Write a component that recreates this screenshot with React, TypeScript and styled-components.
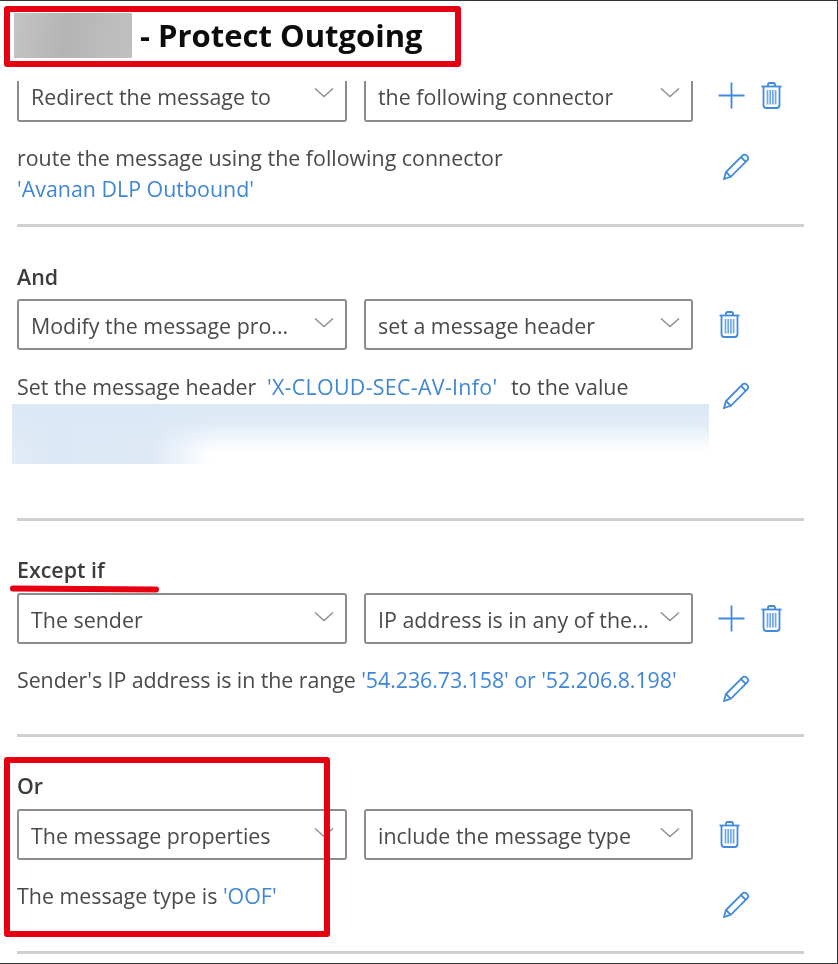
import React from "react";
import styled, { createGlobalStyle } from "styled-components";

const Global = createGlobalStyle`
  html, body { margin: 0; padding: 0; background: #fff; }
`;

const Page = styled.div`
  position: relative;
  width: 838px;
  height: 964px;
  box-sizing: border-box;
  overflow: hidden;
  background: #fff;
  border-top: 1px solid #333;
  border-right: 1px solid #333;
  border-bottom: 1px solid #333;
  font-family: "Open Sans", "Noto Sans", sans-serif;
  font-size: 21.4px;
  color: #444;
`;

const Blurred = styled.div`
  display: flow-root;
  position: relative;
  filter: blur(0.45px);
`;

const TitleBox = styled.header`
  display: flex;
  align-items: center;
  box-sizing: border-box;
  width: 457px;
  height: 61px;
  margin: 5px 0 14px 4px;
  padding-left: 4px;
  border: 6px solid #e60012;
  border-radius: 3px;
`;

const Redacted = styled.div`
  width: 118px;
  height: 45px;
  flex: none;
  margin-bottom: 2px;
  background: linear-gradient(100deg, #c4c4c4 0%, #b4b4b4 45%, #bcbcbc 75%, #c0c0c0 100%);
`;

const Title = styled.h1`
  margin: 0 0 3px 8px;
  font-size: 31px;
  line-height: 40px;
  font-weight: 700;
  white-space: nowrap;
  color: #0c0c0c;
`;

const Section = styled.section<{ $first?: boolean; $top?: number }>`
  padding: ${(p) => (p.$first ? 0 : p.$top ?? 34)}px 0 0 17px;
`;

const Label = styled.div<{ $gap?: number }>`
  height: 30px;
  line-height: 30px;
  margin-bottom: ${(p) => p.$gap ?? 8}px;
  font-weight: 600;
  color: #3c3c3c;
`;

const Controls = styled.div`
  display: flex;
  align-items: flex-start;
`;

const Select = styled.div<{ $clipped?: boolean; $wide?: boolean }>`
  display: flex;
  align-items: center;
  justify-content: space-between;
  box-sizing: border-box;
  width: ${(p) => (p.$wide ? 330 : 329)}px;
  height: ${(p) => (p.$clipped ? 41 : 51)}px;
  padding: ${(p) => (p.$clipped ? "0 11px 9px 12px" : "2px 11px 0 12px")};
  border: 2px solid #8c8c8c;
  border-top: ${(p) => (p.$clipped ? "none" : "2px solid #8c8c8c")};
  border-radius: ${(p) => (p.$clipped ? "0 0 3px 3px" : "3px")};
  margin-right: 17px;
  white-space: nowrap;
  color: #4a4a4a;
  &:nth-child(2) {
    margin-right: 0;
  }
`;

const Chevron = styled.svg`
  width: 20px;
  height: 11px;
  flex: none;
  margin-bottom: 7px;
  fill: none;
  stroke: #8f8f8f;
  stroke-width: 1.5;
`;

const Actions = styled.div<{ $clipped?: boolean; $solo?: boolean }>`
  display: flex;
  align-items: center;
  gap: 16px;
  height: ${(p) => (p.$clipped ? 29 : 51)}px;
  margin-left: ${(p) => (p.$solo ? 26 : 25)}px;
`;

const Icon = styled.svg<{ $w: number; $h: number }>`
  display: block;
  width: ${(p) => p.$w}px;
  height: ${(p) => p.$h}px;
  flex: none;
  fill: none;
  stroke: #3f8ae0;
  stroke-width: 1.8;
`;

const Description = styled.div<{ $gap?: number }>`
  display: grid;
  grid-template-columns: 706px auto;
  margin-top: ${(p) => p.$gap ?? 20}px;
  line-height: 31px;
  white-space: nowrap;
  color: #4a4a4a;
`;

const TightLine = styled.div`
  letter-spacing: -0.07px;
`;

const Link = styled.span<{ $spread?: boolean }>`
  color: #3f87d6;
  letter-spacing: ${(p) => (p.$spread ? "0.3px" : "inherit")};
`;

const Spaced = styled.span`
  margin: 0 8px 0 5px;
`;

const PencilSlot = styled.div`
  height: 0;
  padding-top: 11px;
`;

const BlurBlock = styled.div`
  width: 697px;
  height: 60px;
  margin: 2px 0 0 -5px;
  background:
    linear-gradient(180deg, #dce8f5 0%, rgba(220, 232, 245, 0.9) 30%, rgba(220, 232, 245, 0.35) 58%, rgba(220, 232, 245, 0) 80%),
    linear-gradient(90deg, #e3ecf7 0, #dce8f5 40px, #dfe9f6 140px, rgba(223, 233, 246, 0) 200px);
`;

const Divider = styled.hr<{ $top: number }>`
  width: 787px;
  height: 3px;
  margin: ${(p) => p.$top}px 0 0;
  border: none;
  background: #d0d0d0;
`;

const UnderlineMark = styled.div`
  position: absolute;
  left: 10px;
  top: 585px;
  width: 149px;
  height: 6px;
  border-radius: 3px;
  background: #e60012;
  transform: rotate(0.4deg);
`;

const OrHighlight = styled.div`
  position: absolute;
  left: 4px;
  top: 756px;
  width: 326px;
  height: 180px;
  box-sizing: border-box;
  border: 6px solid #e60012;
  border-radius: 3px;
`;

const ChevronDown = () => (
  <Chevron viewBox="0 0 20 11">
    <path d="M1 1.5 L10 9.5 L19 1.5" />
  </Chevron>
);

const Plus = () => (
  <Icon $w={27} $h={27} viewBox="0 0 27 27">
    <path d="M13.5 0.5 V26.5 M0.5 13.5 H26.5" />
  </Icon>
);

const Trash = () => (
  <Icon $w={21} $h={27} viewBox="0 0 21 27">
    <path d="M0.5 4.5 H20.5" />
    <path d="M7 4.5 V2.6 Q7 1 8.6 1 H12.4 Q14 1 14 2.6 V4.5" />
    <path d="M2.5 4.5 V23 Q2.5 26 5.5 26 H15.5 Q18.5 26 18.5 23 V4.5" />
    <path d="M6.5 8 V22.5 M9.2 8 V22.5 M11.9 8 V22.5 M14.6 8 V22.5" strokeWidth="1.7" opacity="0.75" />
  </Icon>
);

const Pencil = () => (
  <Icon $w={27} $h={27} viewBox="0 0 27 27">
    <path d="M1 26 L3 19 L19.6 2.4 Q21.6 0.6 24 2.8 Q26.2 5 24.4 7.2 L7.8 23.8 Z" />
    <path d="M3 19 L7.8 23.8 M18 4 L22.8 8.8" />
  </Icon>
);

export default function App() {
  return (
    <Page>
      <Global />
      <Blurred>
        <TitleBox>
          <Redacted />
          <Title>- Protect Outgoing</Title>
        </TitleBox>

        <Section $first>
          <Controls>
            <Select $clipped $wide>Redirect the message to<ChevronDown /></Select>
            <Select $clipped>the following connector<ChevronDown /></Select>
            <Actions $clipped><Plus /><Trash /></Actions>
          </Controls>
          <Description>
            <div>route the message using the following connector<br /><Link>'Avanan DLP Outbound'</Link></div>
            <PencilSlot><Pencil /></PencilSlot>
          </Description>
          <Divider $top={20} />
        </Section>

        <Section $top={35}>
          <Label $gap={7}>And</Label>
          <Controls>
            <Select $wide>Modify the message pro...<ChevronDown /></Select>
            <Select>set a message header<ChevronDown /></Select>
            <Actions $solo><Trash /></Actions>
          </Controls>
          <Description $gap={21}>
            <div>Set the message header<Spaced> <Link $spread>'X-CLOUD-SEC-AV-Info'</Link></Spaced> to the value</div>
            <PencilSlot><Pencil /></PencilSlot>
          </Description>
          <BlurBlock />
          <Divider $top={54} />
        </Section>

        <Section>
          <Label>Except if</Label>
          <Controls>
            <Select $wide>The sender<ChevronDown /></Select>
            <Select>IP address is in any of the...<ChevronDown /></Select>
            <Actions><Plus /><Trash /></Actions>
          </Controls>
          <Description>
            <TightLine>Sender's IP address is in the range <Link>'54.236.73.158' or '52.206.8.198'</Link></TightLine>
            <PencilSlot><Pencil /></PencilSlot>
          </Description>
          <Divider $top={39} />
        </Section>

        <Section>
          <Label>Or</Label>
          <Controls>
            <Select $wide>The message properties<ChevronDown /></Select>
            <Select>include the message type<ChevronDown /></Select>
            <Actions $solo><Trash /></Actions>
          </Controls>
          <Description>
            <div>The message type is <Link>'OOF'</Link></div>
            <PencilSlot><Pencil /></PencilSlot>
          </Description>
          <Divider $top={40} />
        </Section>

        <UnderlineMark />
        <OrHighlight />
      </Blurred>
    </Page>
  );
}
